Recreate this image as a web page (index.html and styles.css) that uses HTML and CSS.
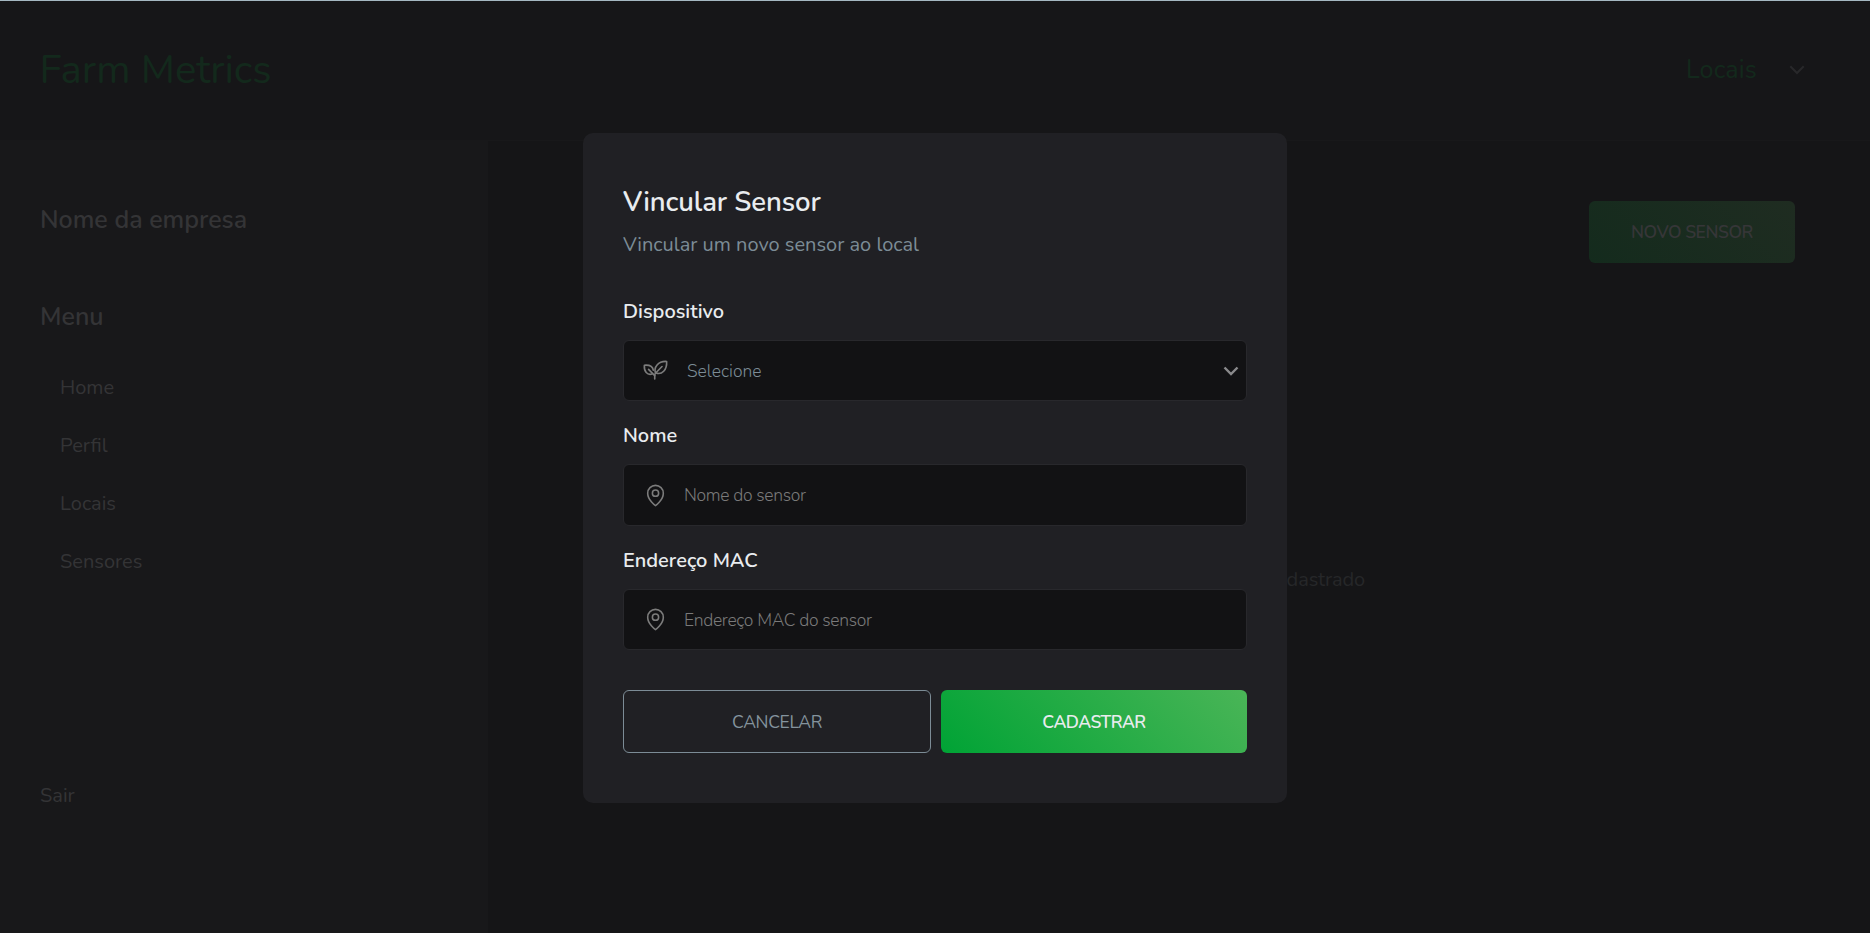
FILE: index.html
```html
<!DOCTYPE html>
<html lang="pt-BR">
<head>
<meta charset="utf-8">
<title>Farm Metrics</title>
<link rel="stylesheet" href="styles.css">
</head>
<body>
<div class="page">
  <header class="header">
    <div class="brand">Farm Metrics</div>
    <div class="header-nav">
      <span class="header-label">Locais</span>
      <svg class="header-chevron" viewBox="0 0 16 10" fill="none" stroke="currentColor" stroke-width="2"><path d="M1.3 1.3 8 8l6.7-6.7"/></svg>
    </div>
  </header>
  <div class="body">
    <aside class="sidebar">
      <div class="company">Nome da empresa</div>
      <div class="menu-title">Menu</div>
      <nav class="menu">
        <a class="menu-item">Home</a>
        <a class="menu-item">Perfil</a>
        <a class="menu-item">Locais</a>
        <a class="menu-item">Sensores</a>
      </nav>
      <a class="logout">Sair</a>
    </aside>
    <main class="main">
      <button class="new-sensor">NOVO SENSOR</button>
      <p class="empty">cadastrado</p>
    </main>
  </div>
</div>

<div class="overlay">
  <form class="modal">
    <h1 class="modal-title">Vincular Sensor</h1>
    <p class="modal-subtitle">Vincular um novo sensor ao local</p>

    <label class="label label-device">Dispositivo</label>
    <div class="field">
      <svg class="icon-plant" viewBox="0 0 26 21" fill="none" stroke="currentColor" stroke-width="1.7" stroke-linecap="round" stroke-linejoin="round">
        <path d="M12.2 19.8v-3.6c0-1.2.4-2.1 1.2-2.9l6.4-6.5"/>
        <path d="M12.2 16.3 5.8 9.8"/>
        <path d="M13 13.6C11 7.6 15.5 1 24.6 1.5 25.1 10.5 19.5 15.6 13.6 13.5"/>
        <path d="M9.3 14.6C4.5 16 .9 12 1.4 5.4 6.4 5 10.2 6.9 10.7 10.6"/>
      </svg>
      <span class="select-value">Selecione</span>
      <svg class="select-chevron" viewBox="0 0 16 10" fill="none" stroke="currentColor" stroke-width="2.4"><path d="M1.5 1.5 8 8l6.5-6.5"/></svg>
    </div>

    <label class="label">Nome</label>
    <div class="field">
      <svg class="icon-pin" viewBox="0 0 256 256" fill="none" stroke="currentColor" stroke-width="16" stroke-linecap="round" stroke-linejoin="round"><circle cx="128" cy="104" r="32"/><path d="M208 104c0 72-80 128-80 128s-80-56-80-128a80 80 0 0 1 160 0Z"/></svg>
      <span class="placeholder">Nome do sensor</span>
    </div>

    <label class="label">Endereço MAC</label>
    <div class="field">
      <svg class="icon-pin" viewBox="0 0 256 256" fill="none" stroke="currentColor" stroke-width="16" stroke-linecap="round" stroke-linejoin="round"><circle cx="128" cy="104" r="32"/><path d="M208 104c0 72-80 128-80 128s-80-56-80-128a80 80 0 0 1 160 0Z"/></svg>
      <span class="placeholder">Endereço MAC do sensor</span>
    </div>

    <div class="actions">
      <button type="button" class="button button-cancel">CANCELAR</button>
      <button type="button" class="button button-submit">CADASTRAR</button>
    </div>
  </form>
</div>
</body>
</html>
```

FILE: styles.css
```css
* { box-sizing: border-box; margin: 0; padding: 0; }

body {
  height: 933px;
  overflow: hidden;
  background: #151517;
  font-family: Nunito, Lato, sans-serif;
  font-size: 20px;
  line-height: 28px;
}

button { font-family: inherit; border: 0; }

.page {
  height: 933px;
  display: flex;
  flex-direction: column;
  border-top: 1px solid #a5b8c2;
}

.header {
  height: 140px;
  flex: none;
  display: flex;
  align-items: center;
  justify-content: space-between;
  padding: 0 65px 1px 39.5px;
  background: #161618;
  border-bottom: 1px solid #18181a;
  color: #13291c;
}
.brand { font-size: 40px; font-weight: 400; line-height: 48px; }
.header-nav { display: flex; align-items: center; gap: 32px; }
.header-label { font-size: 25px; font-weight: 400; letter-spacing: 0.2px; }
.header-chevron { width: 16px; height: 10px; color: #28282a; }

.body { flex: 1; display: flex; }

.sidebar {
  width: 488px;
  display: flex;
  flex-direction: column;
  padding: 63px 40px 0 40px;
  background: #18181a;
  color: #343436;
}
.company { font-size: 25px; font-weight: 600; line-height: 32px; }
.menu-title { margin-top: 65px; font-size: 25px; font-weight: 600; line-height: 32px; }
.menu { display: flex; flex-direction: column; margin-top: 26px; padding-left: 20px; }
.menu-item { line-height: 58px; }
.logout { margin-top: 191px; }

.main {
  flex: 1;
  display: flex;
  flex-direction: column;
  align-items: flex-end;
  padding: 60px 75px 0 0;
}
.new-sensor {
  width: 206px;
  height: 62px;
  border-radius: 6px;
  background: linear-gradient(45deg, #142b1d, #1f2c21);
  color: #363638;
  font-size: 17.5px;
  font-weight: 600;
  letter-spacing: -0.45px;
}
.empty { margin: 303px 430px 0 0; color: #262729; letter-spacing: -0.1px; }

.overlay {
  position: absolute;
  inset: 0;
  display: flex;
  align-items: center;
  justify-content: center;
  padding-top: 3px;
}
.modal {
  width: 704px;
  height: 670.5px;
  padding: 49px 40px 0;
  border-radius: 10px;
  background: #202024;
}
.modal-title { color: #e9ecef; font-size: 27.5px; font-weight: 600; line-height: 40px; letter-spacing: -0.08px; }
.modal-subtitle { margin-top: 9px; color: #7c8c96; font-weight: 400; }
.label { display: block; margin-top: 21px; color: #e9ecef; font-weight: 600; }
.label-device { margin-top: 39px; }

.field {
  height: 61.5px;
  margin-top: 14px;
  display: flex;
  align-items: center;
  padding: 0 7px 0 19px;
  border: 1px solid #28282c;
  border-radius: 6px;
  background: #121214;
}
.icon-plant { width: 25px; height: 20.2px; color: #7c7c7c; }
.icon-pin { width: 25px; height: 25px; color: #7c7c7c; }
.select-value { margin-left: 19px; color: #7c8c96; font-size: 17.5px; font-weight: 300; }
.select-chevron { width: 16px; height: 10px; margin-left: auto; color: #8a8a8c; }
.placeholder { margin-left: 16px; color: #7a7a7a; font-size: 17.5px; font-weight: 300; letter-spacing: -0.33px; }

.actions { display: flex; gap: 10px; margin-top: 40px; }
.button {
  width: 308px;
  height: 63px;
  border-radius: 6px;
  font-size: 17.5px;
  letter-spacing: -0.35px;
}
.button-cancel { border: 1px solid #7c8c96; background: transparent; color: #84939d; }
.button-submit {
  width: 306px;
  background: linear-gradient(45deg, #00a335, #4ab557);
  color: #e9ecef;
  font-weight: 600;
  letter-spacing: -0.5px;
}
```
